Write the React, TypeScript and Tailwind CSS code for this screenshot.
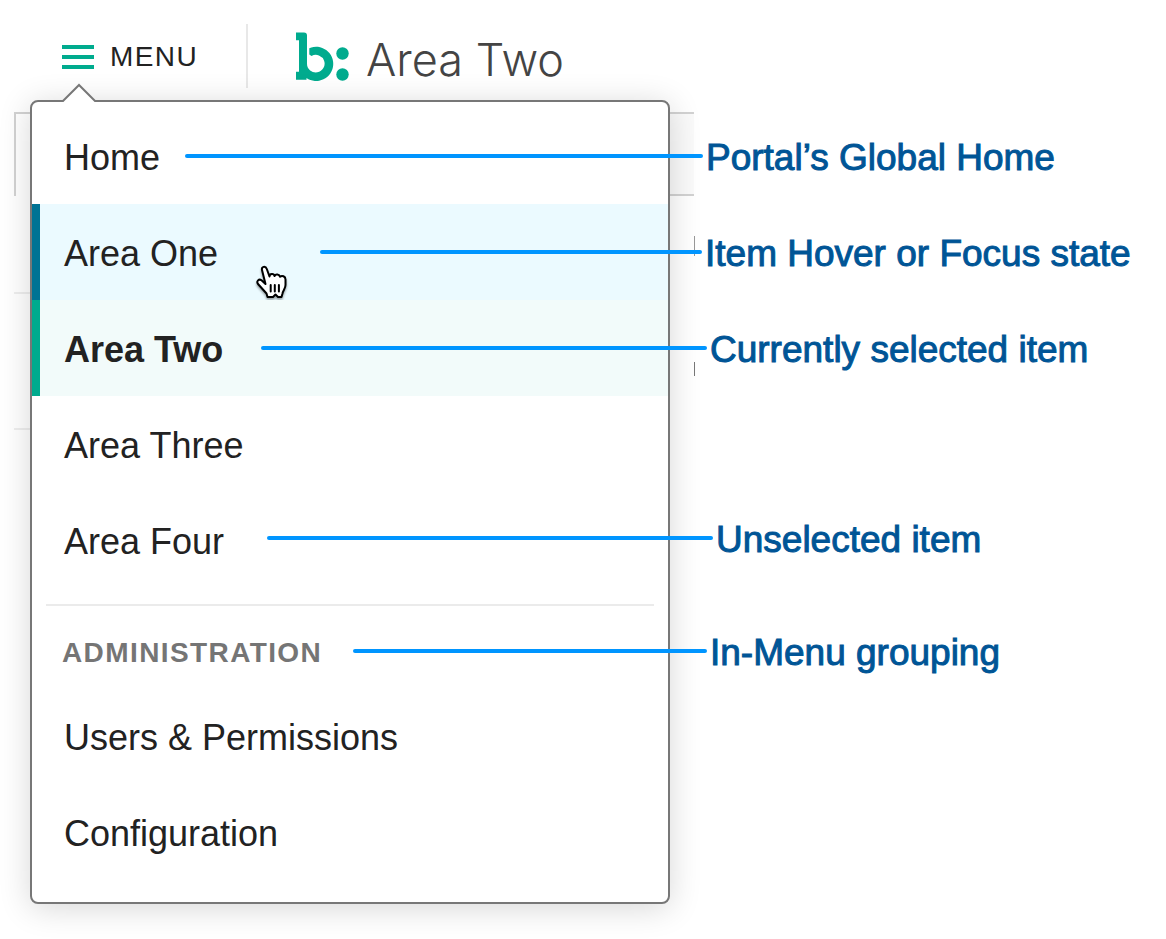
import React from "react";

type MenuItem = { label: string; state?: "hover" | "selected" };

const areas: MenuItem[] = [
  { label: "Home" },
  { label: "Area One", state: "hover" },
  { label: "Area Two", state: "selected" },
  { label: "Area Three" },
  { label: "Area Four" },
];

const admin: MenuItem[] = [{ label: "Users & Permissions" }, { label: "Configuration" }];

const notes = [
  { text: "Portal’s Global Home", start: "pl-[155px]", line: "w-[518px]", row: "h-24" },
  { text: "Item Hover or Focus state", start: "pl-[290px]", line: "w-[382px]", row: "h-24" },
  { text: "Currently selected item", start: "pl-[231px]", line: "w-[446px]", row: "h-24" },
  { text: "Unselected item", start: "pl-[237px]", line: "w-[446px]", row: "mt-[94px] h-24" },
  { text: "In-Menu grouping", start: "pl-[323px]", line: "w-[354px]", row: "mt-[17px] h-24" },
];

function Logo() {
  return (
    <svg viewBox="0 0 54 50" className="h-[50px] w-[54px]" fill="#00ab8e" aria-label="b:" role="img">
      <path d="M0 0.500H8Q11 0.500 11 3.500V31.700A8.800 8.800 0 1 0 15.500 24L13.300 22.500V16.200A17.100 17.100 0 1 1 10.500 46V47.700H0V39.700H3V8.200H0Z" />
      <circle cx="46.500" cy="21.500" r="6.200" />
      <circle cx="46.500" cy="42.500" r="6.200" />
    </svg>
  );
}

function Pointer() {
  return (
    <svg
      viewBox="0 0 32 36"
      className="absolute top-[60px] left-[224px] h-9 w-8 drop-shadow-[0_2px_1px_rgba(0,0,0,0.35)]"
      fill="#fff"
      stroke="#000"
      strokeWidth="2"
      strokeLinejoin="round"
      strokeLinecap="round"
      aria-hidden="true"
    >
      <path d="M6 6C5.200 2.500 9.500 1.500 10.800 5L13.500 12.500C13.500 9.500 18 9.300 18.500 12C19.500 9.800 23.500 10.200 24 12.800C26 11 29.500 12.300 29.500 15.500V21C29.500 24.500 27 26.500 26.500 29.500L25.500 33H22L19.500 30.500L17 33H11.500L10.500 29.500L2 20C0 17 3 14.500 5.500 16.300L9.500 20Z" />
      <path d="M14.700 21V27.500M18.800 21V27.500M22.900 21V27.500" />
    </svg>
  );
}

function Item({ label, state }: MenuItem) {
  const look =
    state === "hover"
      ? "border-[#007394] bg-[#ebfaff]"
      : state === "selected"
        ? "border-[#00ab8e] bg-[#f2fbfa] font-bold"
        : "border-transparent";
  return (
    <li className="relative">
      <a
        href="#"
        aria-current={state === "selected" ? "page" : undefined}
        className={`flex h-24 items-center border-l-8 pt-1 pl-6 ${look}`}
      >
        {label}
      </a>
      {state === "hover" && <Pointer />}
    </li>
  );
}

function Backdrop() {
  return (
    <div aria-hidden="true" className="col-start-1 row-start-1 ml-[14px] flex w-[681px] pt-3">
      <div className="w-10">
        <div className="h-[84px] border-t-2 border-l-2 border-[#d2d2d2]" />
        <div className="mt-24 h-[2px] bg-[#eee]" />
        <div className="mt-[134px] h-[2px] bg-[#eee]" />
      </div>
      <div className="flex flex-1 flex-col items-end">
        <div className="mr-px h-[84px] w-full border-y-2 border-[#d2d2d2] bg-[#fafafa]" />
        <div className="mt-10 h-5 w-px bg-[#999]" />
        <div className="mt-[106px] h-[14px] w-px bg-[#777]" />
      </div>
    </div>
  );
}

export default function App() {
  return (
    <div className="bg-white pb-9 font-['Liberation_Sans',Arial,sans-serif] text-[#222]">
      <header className="flex h-[100px] items-start">
        <button
          type="button"
          aria-expanded="true"
          className="ml-[62px] flex h-[114px] items-center gap-4 text-[28px] leading-8 tracking-wider"
        >
          <span className="flex flex-col gap-[6px]">
            <span className="h-1 w-8 bg-[#00ab8e]" />
            <span className="h-1 w-8 bg-[#00ab8e]" />
            <span className="h-1 w-8 bg-[#00ab8e]" />
          </span>
          MENU
        </button>
        <div className="mt-6 ml-12 h-16 w-[2px] bg-[#e8e8e8]" />
        <div className="ml-12 flex pt-8">
          <Logo />
          <h1 className="ml-4 font-[Inter] text-[45px] leading-[56px] font-light text-[#444]">Area Two</h1>
        </div>
      </header>

      <main className="grid">
        <Backdrop />

        <nav
          aria-label="Main menu"
          className="relative col-start-1 row-start-1 ml-[30px] w-[640px] self-start rounded-lg border-2 border-[#777] bg-white pt-[6px] pb-[22px] text-[36px] leading-10 shadow-[0_4px_32px_rgba(0,0,0,0.16)]"
        >
          <svg viewBox="0 0 36 20" className="absolute top-[-19px] left-[29px] h-5 w-9" aria-hidden="true">
            <path d="M1 20V18L2 18L18 2L34 18L35 18V20Z" fill="#fff" />
            <path d="M0 18H2L18 2L34 18H36" fill="none" stroke="#777" strokeWidth="2" />
          </svg>
          <ul>
            {areas.map((item) => (
              <Item key={item.label} {...item} />
            ))}
          </ul>
          <hr className="mx-[14px] mt-4 border-t-2 border-[#ebebeb]" />
          <h2 className="flex h-[82px] items-center pt-3 pl-[30px] text-[28px] leading-8 font-bold tracking-wider text-[#757575]">
            ADMINISTRATION
          </h2>
          <ul>
            {admin.map((item) => (
              <Item key={item.label} {...item} />
            ))}
          </ul>
        </nav>

        <ul className="pointer-events-none z-10 col-start-1 row-start-1 ml-[30px] pt-2">
          {notes.map((note) => (
            <li key={note.text} className={`flex items-center gap-[3px] ${note.row} ${note.start}`}>
              <span className={`h-1 shrink-0 rounded-full bg-[#0095ff] ${note.line}`} />
              <span className="pt-1 text-[37px] leading-10 whitespace-nowrap text-[#005596] [-webkit-text-stroke:1px_#005596]">
                {note.text}
              </span>
            </li>
          ))}
        </ul>
      </main>
    </div>
  );
}
